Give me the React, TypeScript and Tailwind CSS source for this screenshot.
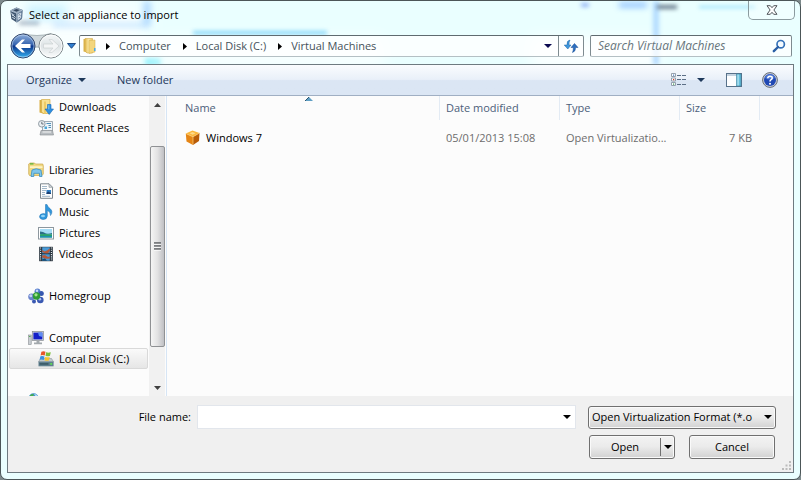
import { useState } from 'react';
import type { ReactNode } from 'react';

function AppIcon() {
  return (
    <svg className="w-4 h-4 shrink-0" viewBox="0 0 16 16">
      <path d="M7.500 0.500L13.500 3L13 11.800L7.800 15.600L2.400 12L1.300 3.600Z" fill="#3d556f" />
      <path d="M7.500 0.500L13.500 3L7.800 6L1.300 3.600Z" fill="#93a6ba" />
      <path d="M7.800 6.200L13.500 3L13 11.800L7.800 15.600Z" fill="#67809b" />
      <path d="M4.200 3.300L7.500 2L10.700 3.100L7.600 4.700Z" fill="#33475e" />
      <path d="M2.600 5.800l1.400 3.200 1-1.800M3.200 10.200l3 1.800M4.500 8.800l2 1.600M9.200 7.400v5M9.200 7.400l2.600-1.200-0.300 2-2.200 1.400 2.200-0.400-0.300 2-2 1.300" fill="none" stroke="#e3edf5" strokeWidth="0.9" />
      <path d="M1.500 3.700L7.800 6.200V15.400M7.800 6.200L13.400 3.100" fill="none" stroke="#c3d2df" strokeWidth="0.8" />
    </svg>
  );
}

function FolderIcon() {
  return (
    <svg className="w-4 h-4 shrink-0" viewBox="0 0 16 16">
      <defs>
        <linearGradient id="folder" x1="0" x2="1">
          <stop offset="0" stopColor="#e2b94f" />
          <stop offset="0.5" stopColor="#fbe9a4" />
          <stop offset="1" stopColor="#e8c766" />
        </linearGradient>
      </defs>
      <path d="M1.5 1H6.5V15L1.5 13.5Z" fill="#dcb44b" />
      <path d="M3 0.5H10.5V15H5L3 13Z" fill="url(#folder)" stroke="#d3ad4a" strokeWidth="0.6" />
      <path d="M7 2.5L13 2V14L7 15.5Z" fill="#f3d67d" stroke="#d3ad4a" strokeWidth="0.5" />
      <path d="M12 10h1.5v3H12z" fill="#4aa7e8" />
    </svg>
  );
}

function DownloadsIcon() {
  return (
    <svg className="w-4 h-4 shrink-0" viewBox="0 0 16 16">
      <path d="M1.5 1H6.5V15L1.5 13.5Z" fill="#d9ae42" />
      <path d="M3.5 0.5H12V14.5H5.5L3.5 13Z" fill="#f8e192" stroke="#d3ad4a" strokeWidth="0.7" />
      <path d="M6 2.5H8V14.5L6 15Z" fill="#eecb66" />
      <path d="M9.5 5.5H13V10H15.5L11.2 15.5L7 10H9.5Z" fill="#2d8fe0" stroke="#1c6ab5" strokeWidth="0.6" />
      <path d="M10.3 6.3h1v4h-1z" fill="#79c4f8" />
    </svg>
  );
}

function RecentIcon() {
  return (
    <svg className="w-4 h-4 shrink-0" viewBox="0 0 16 16">
      <path d="M4.5 1.5H14.5V11H4.5Z" fill="#eef4f9" stroke="#8b98a3" strokeWidth="0.8" />
      <path d="M6.5 6.5h2.5v2.500h-2.500z" fill="#4ba6d8" />
      <path d="M8.500 3.5h4.500M10.500 5.5h2.500M10.500 7.5h2.500" stroke="#4f8fb8" strokeWidth="1" />
      <path d="M3 10.5H14.5L15.5 15H2Z" fill="#b9bec2" stroke="#85898d" strokeWidth="0.6" />
      <path d="M4.5 11.500h8.5v1h-8.500z" fill="#f3f3f3" />
      <circle cx="3.8" cy="3.8" r="3.3" fill="#e9eef2" stroke="#89939c" strokeWidth="0.9" />
      <path d="M3.8 1.8V4H5.6" stroke="#4b5762" strokeWidth="0.8" fill="none" />
    </svg>
  );
}

function LibrariesIcon() {
  return (
    <svg className="w-4 h-4 shrink-0" viewBox="0 0 16 16">
      <path d="M0.7 2L2 1H6.5L7.5 2H14.8L15.3 4V12L14 13.5H1.5L0.7 12Z" fill="#f1d882" stroke="#caa64a" strokeWidth="0.7" />
      <path d="M2 1.8h3.5" stroke="#53b43a" strokeWidth="1.2" />
      <path d="M2 4.2H14.5V6H2Z" fill="#fdf3c4" />
      <path d="M3 14.5L4 8Q8 5.5 13 8L14 14.5H11.5V11.3H5.8V14.5Z" fill="#7fc5ea" stroke="#3a8fc4" strokeWidth="0.8" />
    </svg>
  );
}

function DocumentIcon() {
  return (
    <svg className="w-4 h-4 shrink-0" viewBox="0 0 16 16">
      <path d="M2.5 0.8H11L14.5 4.3V15.3H2.5Z" fill="#fdfdfd" stroke="#7d868d" strokeWidth="1" />
      <path d="M11 0.8V4.3H14.5Z" fill="#d4dbe0" stroke="#7d868d" strokeWidth="0.6" />
      <path d="M4 3.5h5M4 5.5h5M4 7.5h4M4 9.5h3M4 11.5h3M4 13.3h8" stroke="#8ba6bb" strokeWidth="0.8" />
      <path d="M8.5 7H13V11H8.5Z" fill="#2f7fc5" />
      <path d="M8.5 9.7L10.5 8.6L13 10.2V11H8.5Z" fill="#1c3f70" />
    </svg>
  );
}

function MusicIcon() {
  return (
    <svg className="w-4 h-4 shrink-0" viewBox="0 0 16 16">
      <path d="M7.500 0.500H9Q9.600 3 12 4.500Q15.500 7.500 12.500 11.500Q12.800 7.800 9.300 6.500V12Q9 15.500 5.200 15.600Q1.500 15.300 1.500 12.600Q1.800 9.600 5.500 9.600Q6.800 9.600 7.500 10Z" fill="#2f97dc" stroke="#1d6fb0" strokeWidth="0.5" />
      <ellipse cx="5" cy="12" rx="2" ry="1.2" fill="#8fd2f7" />
    </svg>
  );
}

function PicturesIcon() {
  return (
    <svg className="w-4 h-4 shrink-0" viewBox="0 0 16 16">
      <rect x="0.5" y="2.5" width="15" height="11.5" fill="#fff" stroke="#8d979e" />
      <rect x="2" y="4" width="12" height="8.5" fill="#a5dcf5" />
      <path d="M2 6.500Q5 6.500 8 8.500Q11 9 14 8V9.5H2Z" fill="#2b6f86" />
      <path d="M2 9.2Q8 8.500 14 9.5V12.5H2Z" fill="#2aa06a" />
      <path d="M2 11H14V12.5H2Z" fill="#1c8fb2" />
    </svg>
  );
}

function VideosIcon() {
  return (
    <svg className="w-4 h-4 shrink-0" viewBox="0 0 16 16">
      <rect x="1.2" y="0.8" width="13.6" height="14.4" fill="#25303a" />
      <path d="M2.6 1.5V15M13.4 1.5V15" stroke="#e8eef2" strokeWidth="1.1" strokeDasharray="1.1 1.1" />
      <path d="M4.2 1.2h7.6v6H4.2zM4.2 8.2h7.6v6.6H4.2z" fill="#4a9ad6" />
      <path d="M4.200 4L6.500 5.500L9 4.500L11.800 2.500V5L10 7.200H7L4.200 6Z" fill="#b5593a" />
      <path d="M4.200 9.500L7 9L10 11L11.800 10.500V12.500L8 12.800L4.200 11.500Z" fill="#b5593a" />
      <path d="M4.2 13.300L7 12.500L9 14.8H4.2Z" fill="#17496e" />
    </svg>
  );
}

function HomegroupIcon() {
  return (
    <svg className="w-4 h-4 shrink-0" viewBox="0 0 16 16">
      <circle cx="3.6" cy="8.8" r="3.400" fill="#6a84cc" />
      <circle cx="2.8" cy="7.800" r="1.500" fill="#c3d2f4" />
      <circle cx="9.500" cy="3.300" r="2.900" fill="#5a80cf" />
      <circle cx="9" cy="2.7" r="1.2" fill="#c9dafa" />
      <circle cx="13.3" cy="5.500" r="2.500" fill="#3658b0" />
      <circle cx="12.300" cy="12" r="3.3" fill="#3a59b2" />
      <circle cx="11.8" cy="11.2" r="1.4" fill="#a9bfee" />
      <circle cx="6" cy="13.500" r="2" fill="#3a59b2" />
      <circle cx="8.500" cy="8" r="3.7" fill="#2f9c34" />
      <circle cx="8" cy="6.8" r="1.6" fill="#a4e58c" />
    </svg>
  );
}

function ComputerIcon() {
  return (
    <svg className="w-4 h-4 shrink-0" viewBox="0 0 16 16">
      <rect x="0.6" y="5" width="2.6" height="9.5" fill="#c9ced2" stroke="#868c91" strokeWidth="0.6" />
      <path d="M1.2 6.5h1.3" stroke="#3aa63a" strokeWidth="1" />
      <rect x="4.3" y="1.5" width="11.2" height="9" fill="#d7dce0" stroke="#858b90" strokeWidth="0.7" />
      <rect x="5.4" y="2.6" width="9" height="6.8" fill="#1420c8" />
      <path d="M10 2.6H14.4V7L11 6Z" fill="#5f8cf2" />
      <path d="M8.5 10.8h3v1.7h2.5v1.8H6v-1.8h2.5z" fill="#a3a9ad" />
    </svg>
  );
}

function DiskIcon() {
  return (
    <svg className="w-4 h-4 shrink-0" viewBox="0 0 16 16">
      <path d="M2.500 7.500H13.500L15.600 11H0.500Z" fill="#c1c9cf" stroke="#7d868d" strokeWidth="0.5" />
      <path d="M0.500 10.600H15.600V15.300H0.500Z" fill="#5f7f8d" />
      <path d="M1.5 12h9v1.8h-9z" fill="#3e5d6b" />
      <path d="M12.3 12h1.8v1.8h-1.8z" fill="#5ce04e" />
      <path d="M3.400 0.800Q5.500 -0.300 7.500 0.800L6.700 4.600Q4.700 3.600 2.600 4.400Z" fill="#e8562a" />
      <path d="M8.300 1.100Q10 2.200 12.800 1.200L11.900 5Q9.600 5.700 7.500 4.800Z" fill="#7bbf3a" />
      <path d="M2.400 5.200Q4.500 4.500 6.500 5.400L5.800 9Q3.700 8 1.600 8.800Z" fill="#3b8fe0" />
      <path d="M7.300 5.700Q9.300 6.600 11.700 5.900L10.900 9.500Q8.500 10.200 6.500 9.300Z" fill="#f7c22d" />
    </svg>
  );
}

function NetworkIcon() {
  return (
    <svg className="w-4 h-4 shrink-0" viewBox="0 0 16 16">
      <circle cx="5.6" cy="5.2" r="5" fill="#3f8fd0" />
      <path d="M1.5 3Q4 0 6 1.5L4.5 4L2 5.5Z" fill="#47b04a" />
      <path d="M6 1Q9 1 9.8 4L7.5 3Z" fill="#bfe3f7" />
      <rect x="6" y="7" width="9" height="7" fill="#1d39b8" stroke="#9aa3a9" />
    </svg>
  );
}

function CubeIcon() {
  return (
    <svg className="w-4 h-4 shrink-0" viewBox="0 0 16 16">
      <path d="M7.500 0.500L14.500 3L8 6.800L0.800 3.500Z" fill="#fbb63a" />
      <path d="M0.800 3.500L8 6.800V15L1.500 11.500Z" fill="#e58515" />
      <path d="M14.500 3L8 6.800V15L14 11Z" fill="#b85c08" />
      <path d="M4.500 3.300L7.500 2L10.500 3.200L7.700 4.800Z" fill="#fdd88a" />
      <path d="M1 3.600L8 6.800L14.400 3.100M8 6.800V14.500" stroke="#ffd27c" strokeWidth="0.7" fill="none" />
    </svg>
  );
}

function Caret({ className = 'fill-black' }: { className?: string }) {
  return (
    <svg className={`w-2 h-1 shrink-0 ${className}`} viewBox="0 0 8 4">
      <path d="M0 0H8L4 4Z" />
    </svg>
  );
}

const places = [
  { label: 'Downloads', icon: DownloadsIcon, nested: true },
  { label: 'Recent Places', icon: RecentIcon, nested: true },
  null,
  { label: 'Libraries', icon: LibrariesIcon, nested: false },
  { label: 'Documents', icon: DocumentIcon, nested: true },
  { label: 'Music', icon: MusicIcon, nested: true },
  { label: 'Pictures', icon: PicturesIcon, nested: true },
  { label: 'Videos', icon: VideosIcon, nested: true },
  null,
  { label: 'Homegroup', icon: HomegroupIcon, nested: false },
  null,
  { label: 'Computer', icon: ComputerIcon, nested: false },
  { label: 'Local Disk (C:)', icon: DiskIcon, nested: true },
  null,
  { label: '', icon: NetworkIcon, nested: false },
];

const crumbs = ['Computer', 'Local Disk (C:)', 'Virtual Machines'];

const files = [{ name: 'Windows 7', modified: '05/01/2013 15:08', type: 'Open Virtualizatio...', size: '7 KB' }];

function Glass() {
  return (
    <div className="absolute inset-0 overflow-hidden pointer-events-none">
      <div className="absolute left-0 top-0 w-36 h-16 bg-white/70 blur-md" />
      <div className="absolute left-[18px] top-[20px] w-5 h-1 bg-slate-500/50 blur-[2px]" />
      <div className="absolute left-[26px] top-[4px] w-10 h-4 bg-sky-300/30 blur-xs" />
      <div className="absolute left-[52px] top-[22px] w-24 h-1 bg-blue-300/50 blur-[3px]" />
      <div className="absolute left-[142px] top-0 w-2 h-6 bg-blue-300/60 blur-[3px]" />
      <div className="absolute left-[144px] top-[57px] w-4 h-2 bg-cyan-200 blur-[2px]" />
      <div className="absolute left-[192px] top-[30px] w-[134px] h-1 bg-sky-500/50 blur-[2px]" />
      <div className="absolute left-[160px] top-[36px] w-56 h-8 bg-white/60 blur-sm" />
      <div className="absolute left-[530px] top-[36px] w-32 h-8 bg-white/80 blur-sm" />
      <div className="absolute left-[580px] top-[2px] w-2 h-1 bg-blue-700/40 blur-[2px]" />
      <div className="absolute left-[618px] top-[2px] w-7 h-1 bg-blue-500/60 blur-[3px]" />
      <div className="absolute left-[652px] top-0 w-[6px] h-16 bg-blue-300/60 blur-[2px]" />
      <div className="absolute left-[656px] top-[4px] w-5 h-1 bg-slate-600/80 blur-[2px]" />
      <div className="absolute left-[698px] top-[5px] w-14 h-[2px] bg-sky-500/40 blur-[2px]" />
    </div>
  );
}

function TitleBar() {
  return (
    <div className="relative flex items-start h-[34px] pl-2 pr-[5px]">
      <div className="flex items-center gap-1 h-7">
        <AppIcon />
        <h1 className="text-[11px] leading-4 text-black">Select an appliance to import</h1>
      </div>
      <button
        aria-label="Close"
        className="ml-auto flex items-center justify-center w-[47px] h-[19px] border border-t-0 border-[#8b9b9f] rounded-b-[5px] bg-white/30"
      >
        <svg className="w-3 h-[10px]" viewBox="0 0 12 10">
          <path d="M1 0.7H4.3L6 2.7L7.7 0.7H11L7.9 5L11 9.3H7.7L6 7.3L4.3 9.3H1L4.1 5Z" fill="#fff" stroke="#50565a" strokeWidth="1" />
        </svg>
      </button>
    </div>
  );
}

function NavButtons() {
  return (
    <div className="relative flex items-center">
      {/* cradle that joins the two round buttons */}
      <svg className="absolute left-0 top-0 w-[54px] h-[26px]" viewBox="0 0 54 26">
        <path d="M13 0.500Q27 4.500 41 0.500V18Q27 10 13 18Z" fill="#cfd8db" stroke="#9ba7ab" strokeWidth="0.8" />
      </svg>
      <button aria-label="Back" className="relative w-[26px] h-[26px]">
        <svg viewBox="0 0 26 26">
          <defs>
            <linearGradient id="back" x1="0" y1="0" x2="0" y2="1">
              <stop offset="0" stopColor="#8fb0dc" />
              <stop offset="0.45" stopColor="#3563ae" />
              <stop offset="0.5" stopColor="#0c348a" />
              <stop offset="1" stopColor="#35b4f4" />
            </linearGradient>
          </defs>
          <circle cx="13" cy="13" r="12" fill="url(#back)" stroke="#33466b" />
          <circle cx="13" cy="13" r="11" fill="none" stroke="#c3d8f0" strokeOpacity="0.6" />
          <path d="M5 13L12 6.5H15L11 11H20.5V15H11L15 19.5H12Z" fill="#fff" />
        </svg>
      </button>
      <button aria-label="Forward" disabled className="relative w-[26px] h-[26px] ml-[2px]">
        <svg viewBox="0 0 26 26">
          <defs>
            <linearGradient id="forward" x1="0" y1="0" x2="0" y2="1">
              <stop offset="0" stopColor="#f4f8f9" />
              <stop offset="0.5" stopColor="#dde3e5" />
              <stop offset="1" stopColor="#fbfdfd" />
            </linearGradient>
          </defs>
          <circle cx="13" cy="13" r="12" fill="url(#forward)" stroke="#7c868a" />
          <circle cx="13" cy="13" r="11" fill="none" stroke="#fff" strokeOpacity="0.8" />
          <path d="M21 13L14 6.5H11L15 11H5.5V15H15L11 19.5H14Z" fill="#f3f5f6" stroke="#c7cdcf" strokeWidth="0.6" />
        </svg>
      </button>
      <button aria-label="Recent pages" className="flex justify-center w-[15px]">
        <svg className="w-[9px] h-[6px]" viewBox="0 0 9 6">
          <path d="M0.5 0.5H8.5L4.5 5.3Z" fill="#2f7fd0" stroke="#123c78" strokeWidth="0.9" />
        </svg>
      </button>
    </div>
  );
}

function AddressBar() {
  return (
    <div className="relative flex items-center h-[22px] pl-[9px] pr-2">
      <NavButtons />
      <div className="flex flex-1 min-w-0 h-full border border-[#7e8b90] border-t-[#5f6b70] border-b-[#b4c0c4] rounded-[2px] bg-white/75">
        <nav aria-label="Address" className="flex flex-1 items-center min-w-0 pl-[2px]">
          <FolderIcon />
          {crumbs.map((crumb) => (
            <span key={crumb} className="flex items-center">
              <svg className="w-1 h-[7px] ml-2 mr-[9px]" viewBox="0 0 4 7">
                <path d="M0 0L4 3.5L0 7Z" fill="#000" />
              </svg>
              <a href="#" className="pr-1 text-[11px] leading-4 text-[#45525a] whitespace-nowrap">
                {crumb}
              </a>
            </span>
          ))}
        </nav>
        <button aria-label="Previous locations" className="flex items-center justify-center w-5">
          <Caret className="fill-[#0a0a50]" />
        </button>
        <button aria-label="Refresh" className="flex items-center justify-center w-[25px] border-l border-[#7e8b90]">
          <svg className="w-4 h-4" viewBox="0 0 16 16">
            <path d="M7 2Q3.500 2.500 4 7H1.200L4.800 11L8 7H6Q5.800 4 7 2Z" fill="#3f97dc" stroke="#1f65a8" strokeWidth="0.5" />
            <path d="M9.500 14.500Q12.800 13.500 12.500 9.500H15L11.500 5.500L8 9.500H10.300Q10.500 12.500 9.500 14.500Z" fill="#2c6fc0" stroke="#1b4f94" strokeWidth="0.5" />
          </svg>
        </button>
      </div>
      <div className="flex items-center w-[202px] h-full ml-[6px] pl-[7px] pr-[5px] border border-[#7e8b90] border-t-[#5f6b70] border-b-[#b4c0c4] rounded-[2px] bg-white/75">
        <input
          type="text"
          aria-label="Search Virtual Machines"
          placeholder="Search Virtual Machines"
          className="flex-1 min-w-0 bg-transparent outline-none italic text-[12px] leading-4 placeholder:text-[#67757c]"
        />
        <svg className="w-[14px] h-[14px]" viewBox="0 0 14 14">
          <circle cx="8.7" cy="5.2" r="3.7" fill="#f4fbff" stroke="#3572b8" strokeWidth="1.7" />
          <path d="M6 8L1.8 12.2" stroke="#2a5fa5" strokeWidth="2.4" strokeLinecap="round" />
        </svg>
      </div>
    </div>
  );
}

function Toolbar() {
  return (
    <div className="flex items-center h-[31px] shrink-0 pl-[18px] pr-[15px] text-[11px] leading-4 text-[#1e395b] bg-linear-to-b from-[#fafcfe] from-0% via-[#e9f0f9] via-48% to-[#dbe6f4] to-52% border-b border-[#a0afc3]">
      <button className="flex items-center gap-[6px]">
        Organize
        <Caret className="fill-[#1e395b]" />
      </button>
      <button className="ml-[31px]">New folder</button>
      <button aria-label="View" className="ml-auto">
        <svg className="w-4 h-[14px]" viewBox="0 0 16 14">
          <path d="M0.5 0.5h4v3h-4zM0.5 5h4v3h-4zM0.5 9.5h4v3h-4z" fill="#fff" stroke="#8a97a5" strokeWidth="0.9" />
          <path d="M2 1.5h1.2v1.2H2z" fill="#4d7fc2" />
          <path d="M2 6h1.2v1.2H2z" fill="#d43a2a" />
          <path d="M2 10.5h1.2v1.2H2z" fill="#3c9b53" />
          <path d="M6 2.500h4M11 2.500h4M6 6.5h4M11 6.5h4M6 11.500h4M11 11.500h4" stroke="#5c6f86" strokeWidth="1" />
        </svg>
      </button>
      <button aria-label="More view options" className="ml-[10px]">
        <Caret className="fill-[#1e395b]" />
      </button>
      <button aria-label="Show the preview pane" className="ml-[21px]">
        <svg className="w-4 h-[14px]" viewBox="0 0 16 14">
          <rect x="0.5" y="0.5" width="15" height="13" fill="#fdfeff" stroke="#57718a" />
          <path d="M1 1h14v2H1z" fill="#c4d3e0" />
          <path d="M10.5 1H15V13H10.5Z" fill="#66bfdc" stroke="#3a7f9c" strokeWidth="0.6" />
          <path d="M11.5 1.500h1.2v11h-1.2z" fill="#b8e6f2" />
        </svg>
      </button>
      <button aria-label="Help" className="ml-5">
        <svg className="w-4 h-4" viewBox="0 0 16 16">
          <circle cx="8" cy="8" r="7.4" fill="#c9ced8" stroke="#666d78" strokeWidth="1" />
          <circle cx="8" cy="8" r="6" fill="#1f48b4" />
          <path d="M3 6Q8 9 13 6Q12 2.2 8 2.2Q4 2.2 3 6Z" fill="#4a74d2" />
          <path d="M5.8 6.2Q5.9 4.2 8 4.2Q10.3 4.3 10.2 6.1Q10.1 7.2 8.8 7.9Q8 8.4 8 9.5" fill="none" stroke="#fff" strokeWidth="1.6" />
          <circle cx="8" cy="11.7" r="1" fill="#fff" />
        </svg>
      </button>
    </div>
  );
}

function ScrollBar() {
  return (
    <div className="flex flex-col items-center w-4 shrink-0 bg-[#f1f1f1]">
      <div className="flex items-center justify-center h-[17px] shrink-0">
        <svg className="w-[7px] h-1" viewBox="0 0 7 4">
          <path d="M3.500 0L7 4H0Z" fill="#404040" />
        </svg>
      </div>
      <div className="flex flex-col items-center w-full flex-1 pt-[33px] pb-[32px]">
        <div className="flex items-center justify-center w-[15px] flex-1 rounded-[2px] border border-[#8f9194] bg-linear-to-r from-[#f5f5f5] via-[#e2e2e3] to-[#bfc0c4]">
          <svg className="w-[7px] h-[9px]" viewBox="0 0 7 9">
            <path d="M0 1h7M0 4h7M0 7h7" stroke="#5a5c60" strokeWidth="1.600" />
            <path d="M0 2.300h7M0 5.300h7M0 8.300h7" stroke="#fff" strokeWidth="0.800" />
          </svg>
        </div>
      </div>
      <div className="flex items-center justify-center h-[17px] shrink-0">
        <svg className="w-[7px] h-1" viewBox="0 0 7 4">
          <path d="M0 0H7L3.500 4Z" fill="#404040" />
        </svg>
      </div>
    </div>
  );
}

function Sidebar() {
  const [selected, setSelected] = useState('Local Disk (C:)');

  return (
    <div className="flex w-[159px] shrink-0 border-r border-[#d6e5f5] pr-px">
      <ul className="flex-1 min-w-0 h-full overflow-hidden px-px">
        {places.map((place, i) => {
          if (!place) return <li key={i} className="h-[21px]" />;
          const Icon = place.icon;
          const isSelected = selected === place.label;

          return (
            <li key={i}>
              <button
                aria-label={place.label || 'Network'}
                onClick={() => setSelected(place.label)}
                className={`flex items-center gap-[5px] w-full h-[21px] border rounded-[2px] text-[11px] leading-4 text-black whitespace-nowrap ${
                  place.nested ? 'pl-7' : 'pl-[18px]'
                } ${
                  isSelected
                    ? 'border-[#d9d9d9] bg-linear-to-b from-[#fafafa] to-[#e6e6e6]'
                    : 'border-transparent'
                }`}
              >
                <Icon />
                {place.label}
              </button>
            </li>
          );
        })}
      </ul>
      <ScrollBar />
    </div>
  );
}

function HeaderCell({ children }: { children?: ReactNode }) {
  return (
    <th className="relative h-6 pl-[6px] font-normal text-left border-r border-[#e3ebf4] first:pl-[18px]">
      {children}
    </th>
  );
}

function FileList() {
  return (
    <div className="flex-1 min-w-0 overflow-hidden">
      <table className="w-full table-fixed border-separate border-spacing-0 text-[11px] leading-4">
        <colgroup>
          <col className="w-[273px]" />
          <col className="w-[120px]" />
          <col className="w-[120px]" />
          <col className="w-[80px]" />
          <col />
        </colgroup>
        <thead className="text-[#4c607a]">
          <tr>
            <HeaderCell>
              Name
              <svg className="absolute top-px left-[138px] w-2 h-1" viewBox="0 0 8 4">
                <path d="M4 0L8 4H0Z" fill="#5f9fc4" />
                <path d="M4 0L0 4" stroke="#2b5570" strokeWidth="1" />
              </svg>
            </HeaderCell>
            <HeaderCell>Date modified</HeaderCell>
            <HeaderCell>Type</HeaderCell>
            <HeaderCell>Size</HeaderCell>
            <td />
          </tr>
        </thead>
        <tbody className="text-[#6d6d6d]">
          {files.map((file) => (
            <tr key={file.name} className="h-9">
              <td className="pl-[18px]">
                <div className="flex items-center gap-[5px] text-black">
                  <CubeIcon />
                  {file.name}
                </div>
              </td>
              <td className="pl-[6px] whitespace-nowrap">{file.modified}</td>
              <td className="pl-[6px] whitespace-nowrap">{file.type}</td>
              <td className="pr-2 text-right">{file.size}</td>
              <td />
            </tr>
          ))}
        </tbody>
      </table>
    </div>
  );
}

const buttonFace =
  'border border-[#707070] rounded-[3px] bg-linear-to-b from-[#f3f3f3] from-0% via-[#ebebeb] via-48% to-[#d2d2d2] shadow-[inset_0_0_0_1px_#fafafa]';

function Footer() {
  const [fileName, setFileName] = useState('');

  return (
    <div className="relative shrink-0 h-[76px] pt-[9px] pr-[17px] bg-[#f0f0f0] text-[11px] leading-4 text-black">
      <div className="flex items-center">
        <label htmlFor="file-name" className="w-[183px] text-right">
          File name:
        </label>
        <div className="flex flex-1 items-center h-6 ml-[6px] border border-[#e2e6ec] bg-white">
          <input
            id="file-name"
            type="text"
            value={fileName}
            onChange={(e) => setFileName(e.target.value)}
            className="flex-1 min-w-0 h-full px-1 outline-none"
          />
          <button aria-label="Recent file names" className="flex items-center justify-center w-4 h-full">
            <Caret />
          </button>
        </div>
        <div className="relative ml-3">
          <select
            aria-label="File type"
            className={`block w-[188px] h-[23px] pl-[3px] pr-5 appearance-none outline-none overflow-hidden ${buttonFace}`}
          >
            <option>Open Virtualization Format (*.o</option>
          </select>
          <div className="absolute inset-y-0 right-1 flex items-center pointer-events-none">
            <Caret />
          </div>
        </div>
      </div>
      <div className="flex justify-end gap-[14px] mt-[6px] pr-px">
        <div className={`flex w-[86px] h-6 ${buttonFace}`}>
          <button className="flex-1">Open</button>
          <button aria-label="Open options" className="flex items-center justify-center w-[14px] my-[2px] border-l border-[#707070]">
            <Caret />
          </button>
        </div>
        <button className={`w-[86px] h-6 ${buttonFace}`}>Cancel</button>
      </div>
      <svg className="absolute right-[2px] bottom-[2px] w-[9px] h-[9px]" viewBox="0 0 9 9">
        <path d="M7 0h2v2H7zM3.500 3.500h2v2h-2zM7 3.500h2v2H7zM0 7h2v2H0zM3.500 7h2v2h-2zM7 7h2v2H7z" fill="#bcbcbc" />
      </svg>
    </div>
  );
}

export default function App() {
  return (
    <div className="h-screen bg-[#7d8a8c] font-['Open_Sans',sans-serif]">
      <div className="relative flex flex-col h-full overflow-hidden border border-[#4c5658] rounded-[7px] bg-[#eaffff]">
        <Glass />
        <TitleBar />
        <AddressBar />
        <div className="relative flex flex-col flex-1 min-h-0 mt-[7px] mx-[6px] mb-[6px] border border-[#6e7a80] bg-[#fcfcfc]">
          <Toolbar />
          <div className="flex flex-1 min-h-0">
            <Sidebar />
            <FileList />
          </div>
          <Footer />
        </div>
      </div>
    </div>
  );
}
